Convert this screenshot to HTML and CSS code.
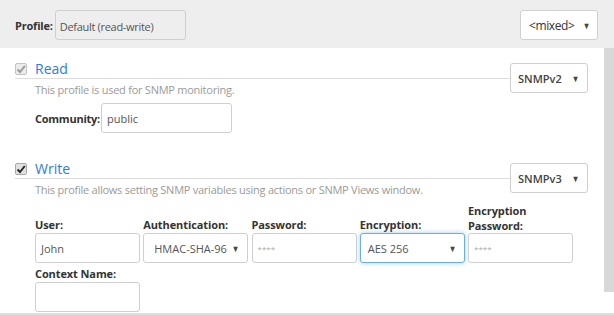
FILE: index.html
```html
<!DOCTYPE html>
<html>
<head>
<meta charset="utf-8">
<link rel="stylesheet" href="styles.css">
</head>
<body>
<div class="header">
  <span class="hlabel">Profile:</span>
  <div class="ro-input">Default (read-write)</div>
  <div class="spacer"></div>
  <div class="select mixed"><span>&lt;mixed&gt;</span><span class="arrow">&#9660;</span></div>
</div>
<div class="main">
  <div class="content">
    <div class="section">
      <div class="titlerow">
        <span class="cb disabled"><svg viewBox="0 0 12 12" width="12" height="12"><path d="M2.5 6.5 L5 9 L9.8 3" fill="none" stroke="#9a9a9a" stroke-width="2"/></svg></span>
        <span class="title">Read</span>
      </div>
      <div class="select ver"><span>SNMPv2</span><span class="arrow">&#9660;</span></div>
      <div class="desc">This profile is used for SNMP monitoring.</div>
      <div class="community">
        <span class="flabel">Community:</span>
        <div class="input wide">public</div>
      </div>
    </div>
    <div class="section write">
      <div class="titlerow">
        <span class="cb"><svg viewBox="0 0 12 12" width="12" height="12"><path d="M2.5 6.5 L5 9 L9.8 3" fill="none" stroke="#2a2a2a" stroke-width="2"/></svg></span>
        <span class="title">Write</span>
      </div>
      <div class="select ver"><span>SNMPv3</span><span class="arrow">&#9660;</span></div>
      <div class="desc">This profile allows setting SNMP variables using actions or SNMP Views window.</div>
      <div class="fields">
        <div class="field"><label class="flabel">User:</label><div class="input">John</div></div>
        <div class="field"><label class="flabel">Authentication:</label><div class="input sel"><span>HMAC-SHA-96</span><span class="arrow">&#9660;</span></div></div>
        <div class="field"><label class="flabel">Password:</label><div class="input pw">****</div></div>
        <div class="field"><label class="flabel">Encryption:</label><div class="input sel focus"><span>AES 256</span><span class="arrow">&#9660;</span></div></div>
        <div class="field"><label class="flabel two"><span class="ln">Encryption</span><span class="ln">Password:</span></label><div class="input pw">****</div></div>
        <div class="field"><label class="flabel">Context Name:</label><div class="input"></div></div>
      </div>
    </div>
  </div>
  <div class="scrollbar"></div>
</div>
<div class="footer"></div>
</body>
</html>
```
FILE: styles.css
```css
* { box-sizing: border-box; }
html, body { margin: 0; padding: 0; }
body {
  width: 614px;
  height: 315px;
  overflow: hidden;
  background: #fff;
  font-family: "Open Sans", "Noto Sans", sans-serif;
  color: #333;
  position: relative;
}
.header {
  height: 48px;
  background: #eeeeee;
  display: flex;
  align-items: flex-start;
  padding: 10px 16px 0 15px;
}
.hlabel {
  font-weight: bold;
  font-size: 11px;
  margin-top: 8px;
  margin-right: 2px;
  letter-spacing: -0.2px;
}
.ro-input {
  width: 131px;
  height: 30px;
  border: 1px solid #cfcfcf;
  border-radius: 3px;
  background: #eeeeee;
  font-size: 11px;
  color: #555;
  padding: 8px 0 0 4px;
  letter-spacing: -0.3px;
}
.spacer { flex: 1; }
.select {
  height: 30px;
  border: 1px solid #cfcfcf;
  border-radius: 3px;
  background: #fff;
  display: flex;
  align-items: center;
  justify-content: space-between;
  font-size: 12px;
  color: #333;
}
.arrow {
  font-size: 9px;
  color: #444;
  transform: scaleX(0.85);
}
.mixed {
  width: 78px;
  padding: 0 6px 0 8px;
  letter-spacing: -0.4px;
}
.main {
  display: flex;
  height: 265px;
}
.content { flex: 1; }
.scrollbar {
  width: 10px;
  height: 244px;
  background: #d8d8d8;
}
.section {
  display: grid;
  grid-template-columns: 1fr 78px;
  padding: 11px 16px 0 15px;
}
.write { padding-top: 26px; }
.titlerow {
  grid-column: 1;
  grid-row: 1;
  display: flex;
  align-items: center;
  height: 20px;
  border-bottom: 1px solid #dcdcdc;
}
.cb {
  width: 12px;
  height: 12px;
  border: 1px solid #a8a8a8;
  border-radius: 2px;
  background: #e2e2e2;
  display: flex;
  margin-right: 8px;
}
.cb svg { display: block; margin: -1px; }
.cb.disabled { background: #ebebeb; border-color: #c4c4c4; }
.title {
  font-size: 14px;
  color: #2b7ce9;
  line-height: 18px;
}
.ver {
  grid-column: 2;
  grid-row: 1 / span 2;
  align-self: start;
  margin-top: 4px;
  padding: 0 7px 0 7px;
  font-size: 11px;
  font-weight: 600;
  color: #444;
}
.desc {
  grid-column: 1;
  grid-row: 2;
  padding-left: 20px;
  font-size: 11px;
  color: #9a9a9a;
  line-height: 16px;
  margin-top: 3px;
  letter-spacing: -0.25px;
}
.community {
  grid-column: 1 / span 2;
  grid-row: 3;
  display: flex;
  align-items: center;
  padding-left: 20px;
  margin-top: 5px;
}
.community .flabel { margin-right: 1px; letter-spacing: -0.25px; }
.flabel {
  font-weight: bold;
  font-size: 11px;
  line-height: 11px;
  color: #333;
  letter-spacing: -0.1px;
}
.flabel.two { display: flex; flex-direction: column; line-height: 14.5px; margin-bottom: 0; }
.input {
  height: 30px;
  border: 1px solid #cfcfcf;
  border-radius: 3px;
  background: #fff;
  font-size: 11px;
  color: #555;
  display: flex;
  align-items: center;
  padding: 0 5px;
}
.input.wide { width: 131px; }
.fields {
  grid-column: 1 / span 2;
  grid-row: 3;
  display: grid;
  grid-template-columns: repeat(5, 105px);
  column-gap: 3.25px;
  row-gap: 5px;
  padding-left: 20px;
  margin-top: 6px;
}
.field {
  display: flex;
  flex-direction: column;
  justify-content: flex-end;
}
.field .flabel { margin-bottom: 3px; }
.field .flabel.two { margin-bottom: 0; }
.sel {
  justify-content: space-between;
  padding: 0 7px 0 10px;
}
.pw { color: #aaa; font-size: 8px; }
.focus {
  border-color: #66afe9;
  box-shadow: 0 0 5px rgba(102, 175, 233, 0.6);
  padding-left: 7px;
}
.footer {
  position: absolute;
  left: 0;
  right: 0;
  top: 313px;
  height: 2px;
  background: #dedede;
}
```
